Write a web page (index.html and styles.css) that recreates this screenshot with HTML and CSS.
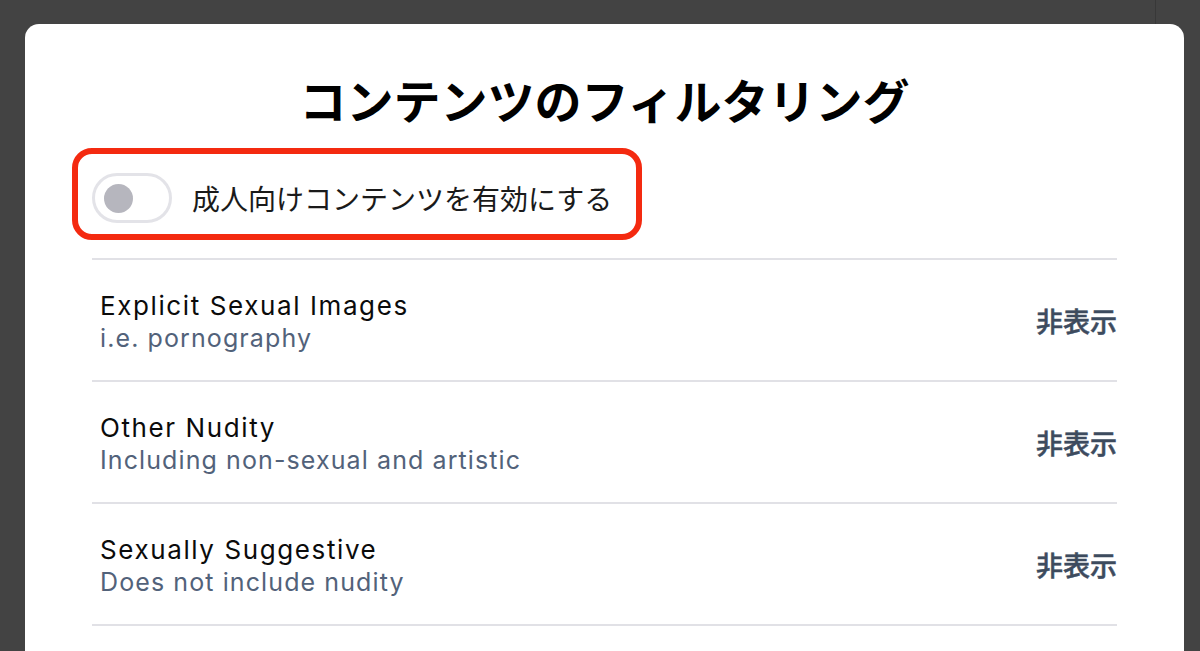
FILE: index.html
```html
<!DOCTYPE html>
<html lang="ja">
<head>
    <meta charset="UTF-8">
    <meta name="viewport" content="width=device-width, initial-scale=1.0">
    <title>コンテンツのフィルタリング</title>
    <link rel="stylesheet" href="styles.css">
</head>
<body>
    <!-- Filtering dialog -->
    <div class="sheet">
        <h1 class="sheet-title">コンテンツのフィルタリング</h1>

        <div class="sheet-body">
            <!-- Adult content switch -->
            <div class="adult-box">
                <label class="adult-toggle">
                    <span class="switch"><span class="knob"></span></span>
                    <span class="switch-label">成人向けコンテンツを有効にする</span>
                </label>
            </div>

            <!-- Label preferences -->
            <ul class="label-list">
                <li class="label-row">
                    <div class="label-text">
                        <div class="label-name">Explicit Sexual Images</div>
                        <div class="label-desc">i.e. pornography</div>
                    </div>
                    <button class="label-value">非表示</button>
                </li>
                <li class="label-row">
                    <div class="label-text">
                        <div class="label-name">Other Nudity</div>
                        <div class="label-desc">Including non-sexual and artistic</div>
                    </div>
                    <button class="label-value">非表示</button>
                </li>
                <li class="label-row">
                    <div class="label-text">
                        <div class="label-name">Sexually Suggestive</div>
                        <div class="label-desc">Does not include nudity</div>
                    </div>
                    <button class="label-value">非表示</button>
                </li>
            </ul>
        </div>
    </div>
</body>
</html>
```

FILE: styles.css
```css
/* Page backdrop, with the faint split line of the window behind */
body {
    margin: 0;
    height: 651px;
    overflow: hidden;
    background: linear-gradient(to right, transparent 1155px, #383838 1155px, #383838 1156px, transparent 1156px), #434343;
    font-family: Inter, "Noto Sans", "Noto Sans CJK JP", sans-serif;
    color: #111;
}

/* White dialog sheet */
.sheet {
    margin: 24px 16px 0 25px;
    min-height: 700px;
    background: #fff;
    border-radius: 14px 14px 0 0;
    padding-top: 44px;
}

.sheet-title {
    margin: 0;
    text-align: center;
    font-family: "Noto Sans CJK JP", sans-serif;
    font-size: 47px;
    font-weight: 700;
    line-height: 62px;
    color: #000;
}

.sheet-body {
    margin: 0 67px;
}

/* Red outline round the adult switch */
.adult-box {
    display: inline-block;
    margin: 18px 0 18px -20px;
    border: 6px solid #f42a10;
    border-radius: 20px;
    padding: 19px 24px 11px 14px;
}

.adult-toggle {
    display: flex;
    align-items: center;
    gap: 20px;
}

/* Switch (off state) */
.switch {
    display: flex;
    align-items: center;
    box-sizing: border-box;
    width: 80px;
    height: 50px;
    border: 3px solid #e3e3e8;
    border-radius: 25px;
    padding-left: 9px;
    background: #fff;
}

.knob {
    width: 29px;
    height: 29px;
    border-radius: 50%;
    background: #b6b6be;
}

.switch-label {
    font-family: "Noto Sans CJK JP", sans-serif;
    font-size: 28px;
    line-height: 36px;
    color: #1a1a1a;
}

/* Label list */
.label-list {
    list-style: none;
    margin: 0;
    padding: 0;
    border-top: 2px solid #e1e1e6;
}

.label-row {
    display: flex;
    align-items: center;
    justify-content: space-between;
    height: 120px;
    border-bottom: 2px solid #e1e1e6;
    padding-left: 8px;
}

.label-text {
    padding-top: 4px;
}

.label-name {
    font-size: 26px;
    line-height: 33px;
    letter-spacing: 1.6px;
    color: #0b0b0b;
}

.label-desc {
    font-size: 25px;
    line-height: 33px;
    letter-spacing: 1.1px;
    color: #52627a;
}

.label-value {
    border: 0;
    padding: 0;
    background: none;
    font-family: "Noto Sans CJK JP", sans-serif;
    font-size: 27px;
    font-weight: 500;
    color: #3d4b5e;
    -webkit-text-stroke: 0.5px #3d4b5e;
}
```
